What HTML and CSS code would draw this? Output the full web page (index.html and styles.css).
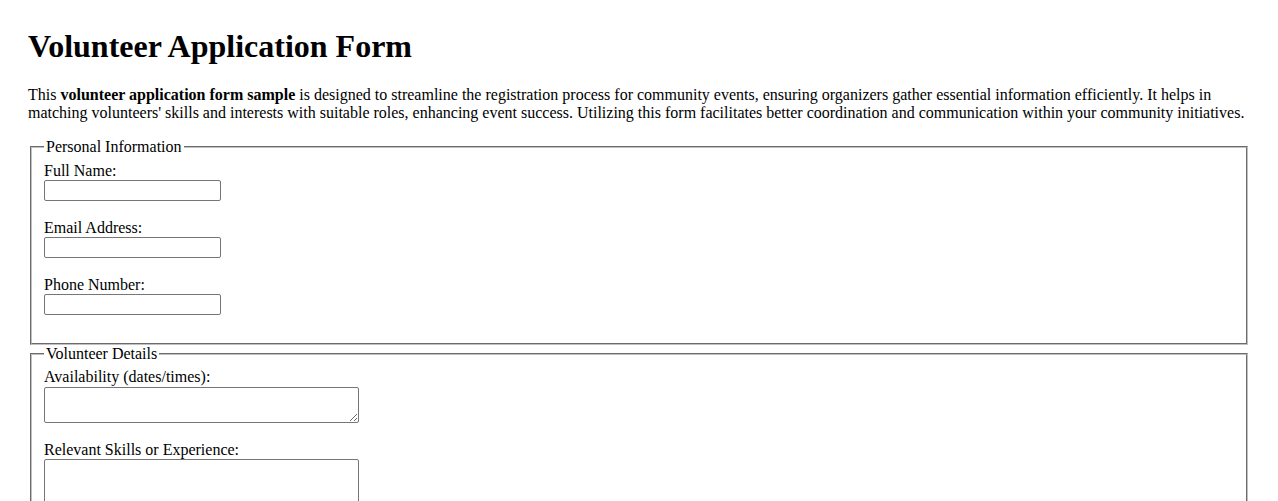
FILE: index.html
```html
<!DOCTYPE html>
<html lang="en">
<head>
    <meta charset="UTF-8">
    <meta name="viewport" content="width=device-width, initial-scale=1.0">
    <title>Volunteer Application Form</title>
    <link rel="stylesheet" href="styles.css">
</head>
<body>
    <h1>Volunteer Application Form</h1>
    <p>This <strong>volunteer application form sample</strong> is designed to streamline the registration process for community events, ensuring organizers gather essential information efficiently. It helps in matching volunteers' skills and interests with suitable roles, enhancing event success. Utilizing this form facilitates better coordination and communication within your community initiatives.</p>

    <form>
        <fieldset>
            <legend>Personal Information</legend>
            <label for="full-name">Full Name:</label><br>
            <input type="text" id="full-name" name="full-name"><br><br>

            <label for="email">Email Address:</label><br>
            <input type="email" id="email" name="email"><br><br>

            <label for="phone">Phone Number:</label><br>
            <input type="tel" id="phone" name="phone"><br><br>
        </fieldset>

        <fieldset>
            <legend>Volunteer Details</legend>
            <label for="availability">Availability (dates/times):</label><br>
            <textarea id="availability" name="availability" rows="2" cols="40"></textarea><br><br>

            <label for="skills">Relevant Skills or Experience:</label><br>
            <textarea id="skills" name="skills" class="tall" rows="4" cols="40"></textarea><br><br>
        </fieldset>
    </form>
</body>
</html>
```

FILE: styles.css
```css
body {
    font-family: "Liberation Serif", "Times New Roman", serif;
    font-size: 16px;
    margin: 8px;
    padding: 20px;
    color: #000;
    background-color: #fff;
}
h1 {
    font-size: 32px;
    margin: 0 0 21px;
}
p {
    margin: 16px 0;
    line-height: 18px;
}
fieldset {
    margin: 0 2px;
    padding: 0.35em 12px 10px;
    border: 2px groove #c0c0c0;
}
legend {
    padding: 0 2px;
    line-height: 18px;
}
label {
    line-height: 18px;
}
input {
    width: 177px;
    height: 21px;
    box-sizing: border-box;
    border: 1px solid #767676;
    border-radius: 2px;
    padding: 1px 2px;
    font-size: 13px;
    vertical-align: bottom;
}
textarea {
    width: 315px;
    height: 36px;
    margin-top: 1px;
    box-sizing: border-box;
    border: 1px solid #767676;
    border-radius: 2px;
    font-family: "Liberation Mono", monospace;
    font-size: 13px;
    vertical-align: bottom;
}
textarea.tall {
    height: 68px;
    margin-top: 0;
}
```
